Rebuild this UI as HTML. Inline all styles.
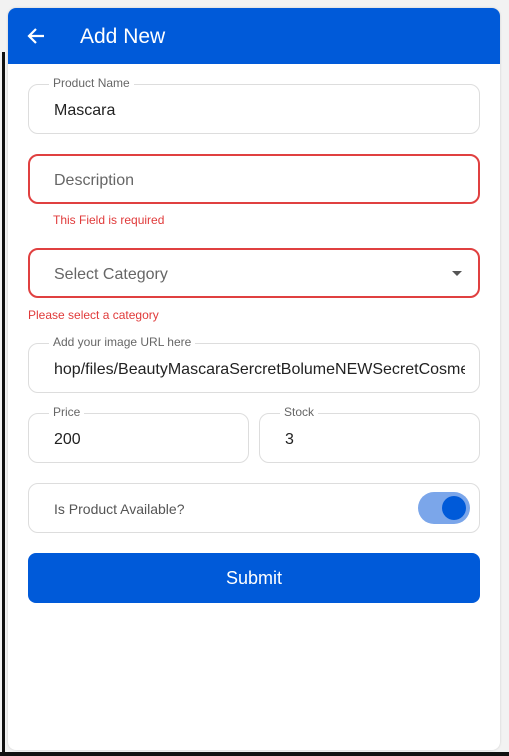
<!DOCTYPE html>
<html><head><style>
*{box-sizing:border-box;margin:0;padding:0}
body{width:509px;height:756px;background:#f2f2f2;position:relative;overflow:hidden;font-family:"Liberation Sans",Roboto,sans-serif}
.lb{position:absolute;left:2px;top:52px;width:3px;height:704px;background:#111}
.bb{position:absolute;left:0;top:752px;width:509px;height:4px;background:#111}
.card{position:absolute;left:8px;top:8px;width:492px;height:742px;background:#fff;border-radius:8px;overflow:hidden;box-shadow:0 0 2px #ccc}
.hdr{height:56px;background:#005ad9;color:#fff;position:relative}
.hdr .t{position:absolute;left:72px;top:17px;font-size:21px}
.hdr svg{position:absolute;left:18px;top:18px}
.f{position:absolute;left:20px;width:452px;height:50px;border:1px solid #ddd;border-radius:10px;font-size:16px;color:#222}
.f .lab{position:absolute;top:-9px;left:20px;background:#fff;padding:0 4px;font-size:12px;color:#666}
.f .v{position:absolute;left:25px;top:17px;white-space:nowrap;overflow:hidden;right:14px}
.err{border:2px solid #e04040}
.err .v{left:24px;top:16px;color:#666}
.em{position:absolute;font-size:12px;color:#e03a3a}
.btn{position:absolute;left:20px;top:545px;width:452px;height:50px;background:#005ad9;border-radius:8px;color:#fff;font-size:18px;text-align:center;line-height:50px}
</style></head><body>
<div class="lb"></div><div class="bb"></div>
<div class="card">
<div class="hdr"><svg width="20" height="20" viewBox="0 0 20 20"><path d="M18 10H3M10 3L3 10l7 7" stroke="#fff" stroke-width="2.2" fill="none"/></svg><div class="t">Add New</div></div>
<div class="f" style="top:76px"><div class="lab">Product Name</div><div class="v">Mascara</div></div>
<div class="f err" style="top:146px"><div class="v">Description</div></div>
<div class="em" style="left:45px;top:205px">This Field is required</div>
<div class="f err" style="top:240px"><div class="v">Select Category</div><svg style="position:absolute;right:16px;top:21px" width="10" height="5"><path d="M0 0h10L5 5z" fill="#555"/></svg></div>
<div class="em" style="left:20px;top:300px">Please select a category</div>
<div class="f" style="top:335px"><div class="lab">Add your image URL here</div><div class="v">hop/files/BeautyMascaraSercretBolumeNEWSecretCosmetics</div></div>
<div class="f" style="top:405px;width:221px"><div class="lab">Price</div><div class="v">200</div></div>
<div class="f" style="top:405px;left:251px;width:221px"><div class="lab">Stock</div><div class="v">3</div></div>
<div class="f" style="top:475px"><div class="v" style="font-size:14px;color:#555;top:17px">Is Product Available?</div>
<div style="position:absolute;right:9px;top:8px;width:52px;height:32px;border-radius:16px;background:#7ba6ea"><div style="position:absolute;right:4px;top:4px;width:24px;height:24px;border-radius:50%;background:#005ad9"></div></div></div>
<div class="btn">Submit</div>
</div>
</body></html>
